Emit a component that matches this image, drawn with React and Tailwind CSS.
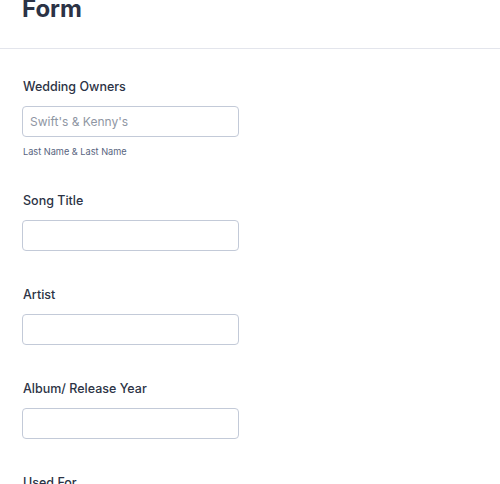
export default function App() {
  const fields = ["Song Title", "Artist", "Album/ Release Year"];

  return (
    <div className="h-[484px] w-[500px] overflow-hidden bg-white font-['Inter',sans-serif] text-[#2c3345]">
      {/* header */}
      <div className="flex h-[49px] flex-col border-b border-[#e3e5ec] pl-[22px]">
        <h1 className="-mt-[3px] text-[24px] font-bold leading-6">Form</h1>
      </div>

      <div className="pl-[22px] pt-[28px]">
        <div>
          <label className="block pl-px text-[12.5px] font-medium leading-5">Wedding Owners</label>
          <input
            placeholder="Swift's & Kenny's"
            className="mt-[9px] block h-[31px] w-[217px] rounded border border-[#c3cad8] px-[7px] text-[12px] placeholder:text-[#8f96a3] outline-none"
          />
          <p className="mt-2 pl-px text-[9.2px] leading-[14px] text-[#57647e]">Last Name &amp; Last Name</p>
        </div>

        {fields.map((f, i) => (
          <div key={f} className={i === 0 ? "mt-[32px]" : "mt-[34px]"}>
            <label className="block pl-px text-[12.5px] font-medium leading-5">{f}</label>
            <input className="mt-[9px] block h-[31px] w-[217px] rounded border border-[#c3cad8] px-2 text-[12px] outline-none" />
          </div>
        ))}

        <div className="mt-[34px]">
          <label className="block pl-px text-[12.5px] font-medium leading-5">Used For</label>
        </div>
      </div>
    </div>
  );
}
